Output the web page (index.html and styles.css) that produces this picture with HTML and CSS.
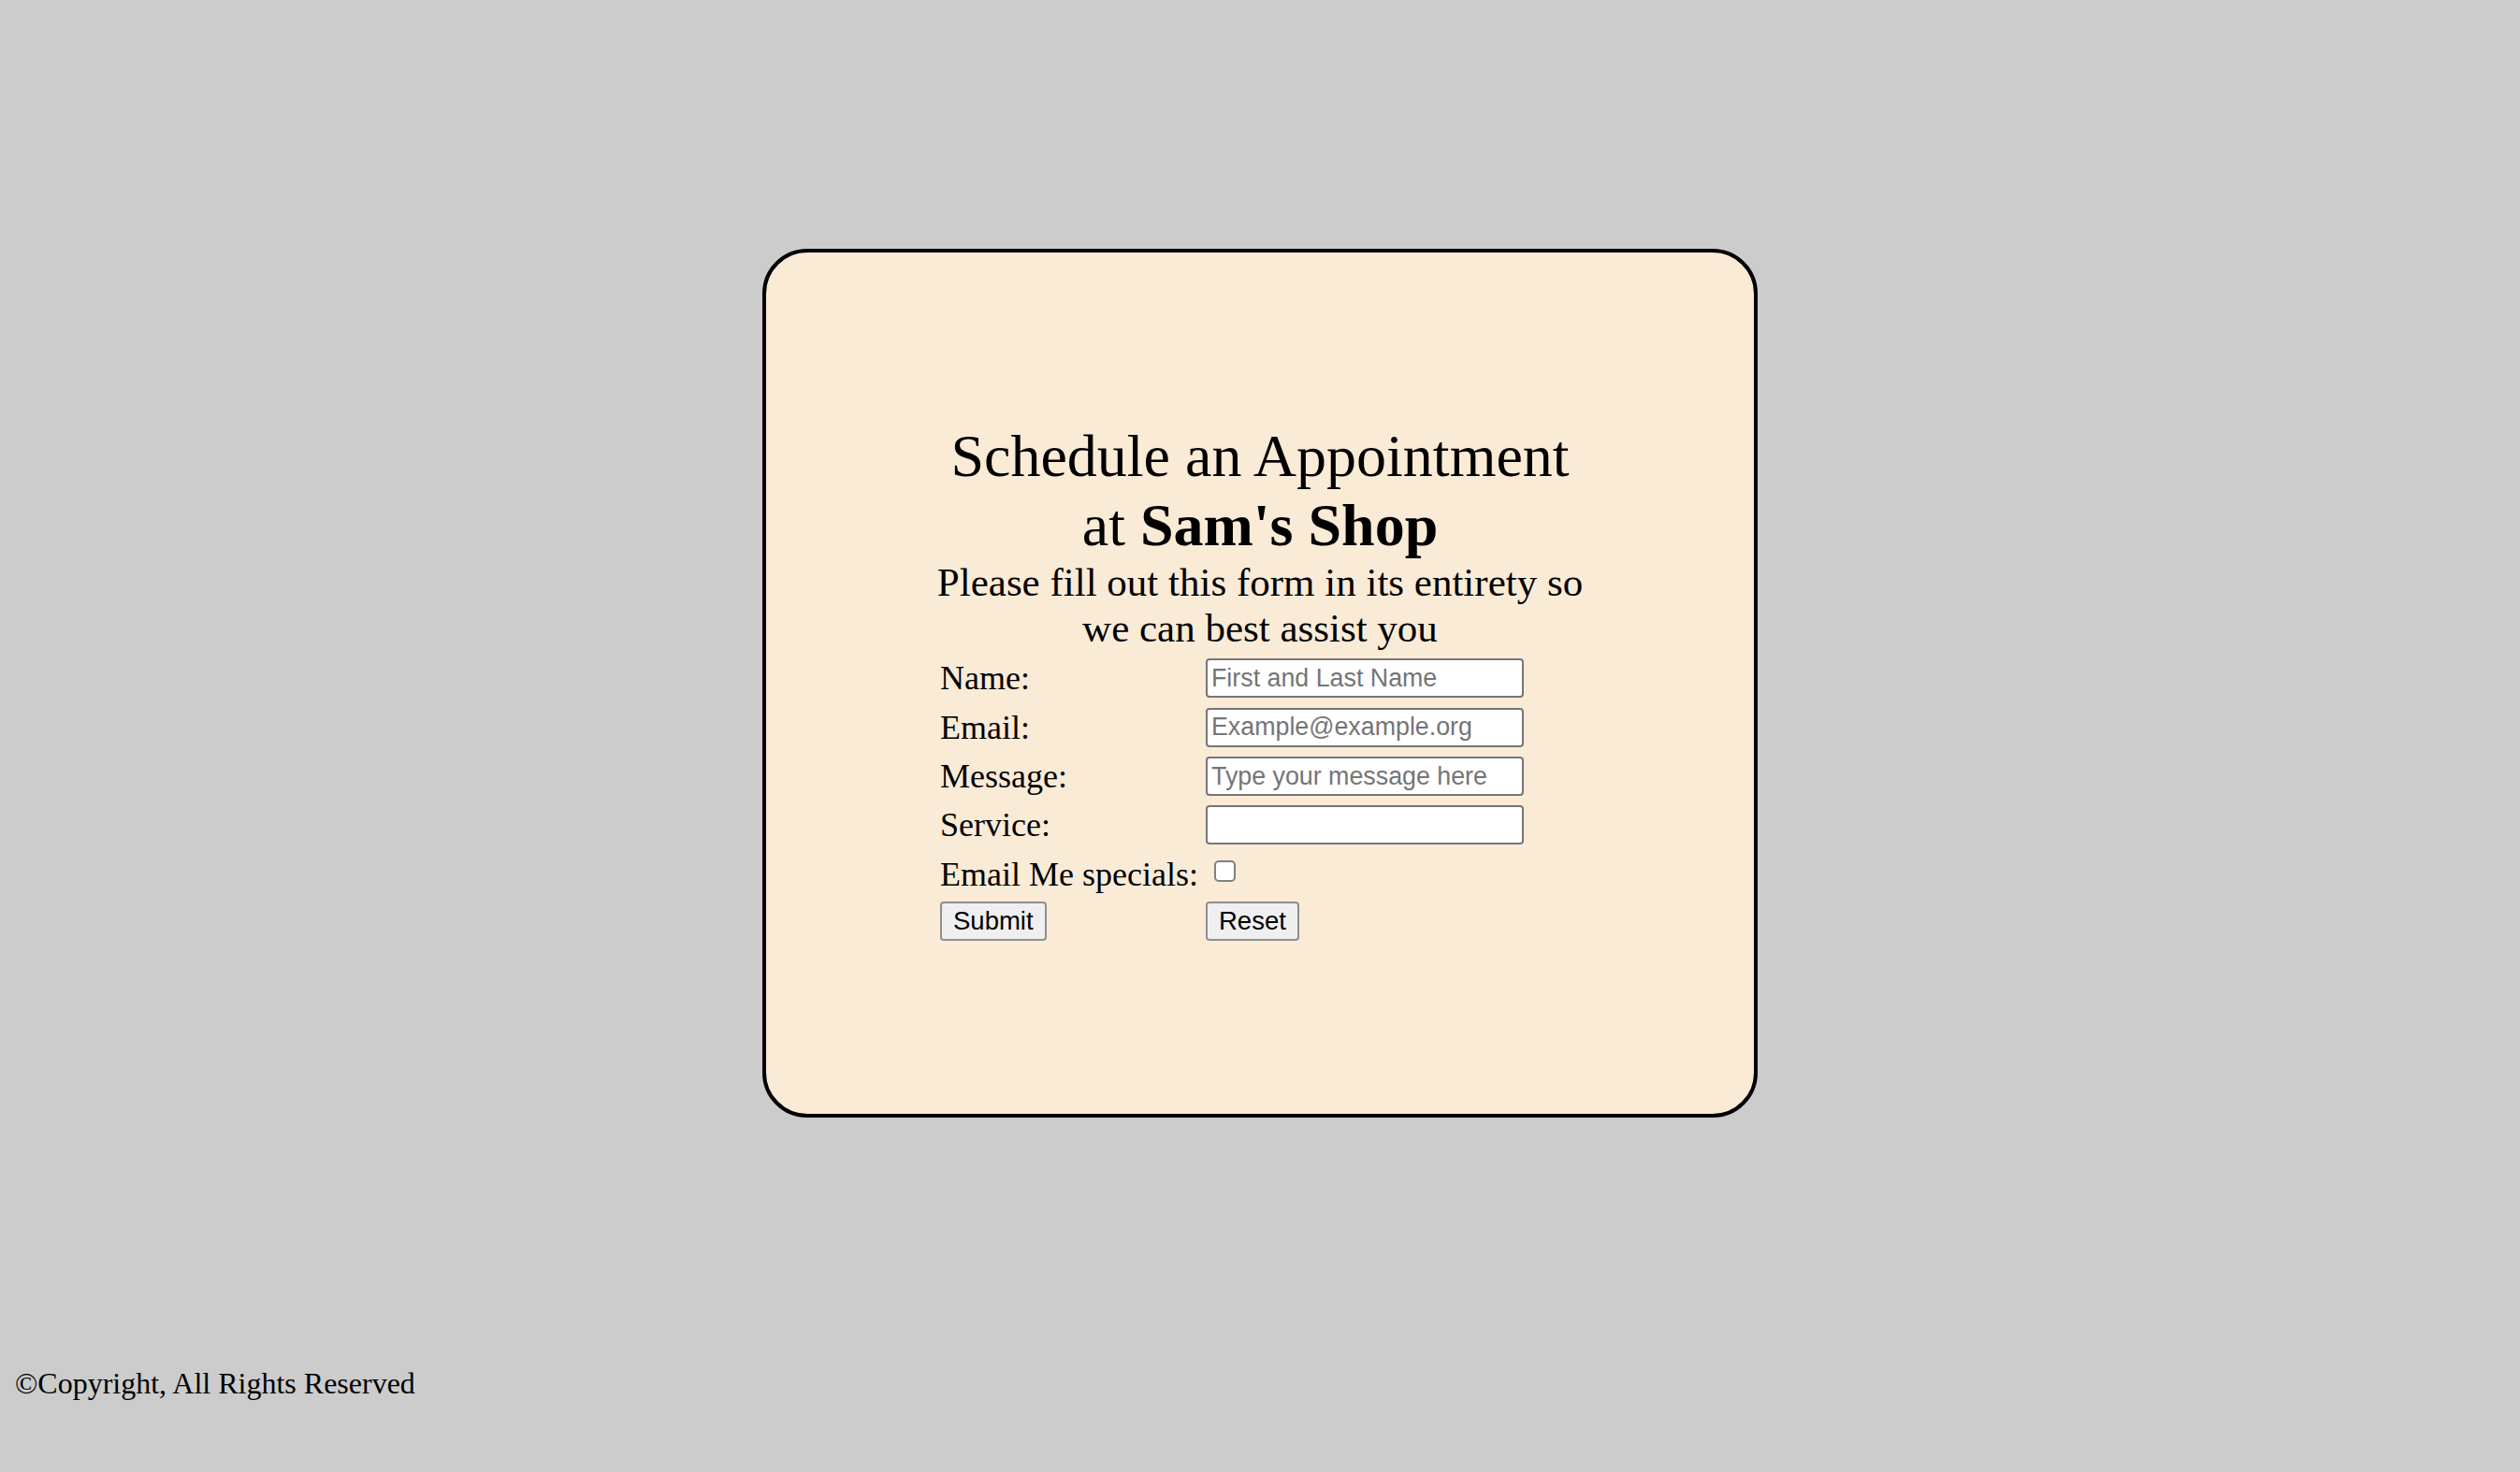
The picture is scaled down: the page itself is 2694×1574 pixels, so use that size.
FILE: index.html
```html
<!DOCTYPE html>
<html lang="en">
<head>
<meta charset="utf-8">
<title>Schedule an Appointment at Sam's Shop</title>
<link rel="stylesheet" href="styles.css">
</head>
<body>
  <div class="card">
    <div class="inner">
      <h1 class="title">Schedule an Appointment at <strong>Sam's Shop</strong></h1>
      <p class="subtitle">Please fill out this form in its entirety so we can best assist you</p>
      <form class="form">
        <label class="label" for="name">Name:</label>
        <input class="field" id="name" type="text" placeholder="First and Last Name">
        <label class="label" for="email">Email:</label>
        <input class="field" id="email" type="email" placeholder="Example@example.org">
        <label class="label" for="message">Message:</label>
        <input class="field" id="message" type="text" placeholder="Type your message here">
        <label class="label" for="service">Service:</label>
        <input class="field" id="service" type="text">
        <label class="label" for="specials">Email Me specials:</label>
        <div class="check-cell"><input class="check" id="specials" type="checkbox"></div>
        <div class="action"><button class="btn" type="submit">Submit</button></div>
        <div class="action"><button class="btn" type="reset">Reset</button></div>
      </form>
    </div>
  </div>
  <p class="footer">©Copyright, All Rights Reserved</p>
</body>
</html>
```

FILE: styles.css
```css
html, body {
  background: #cccccc;
}

body {
  margin: 16px;
  font-family: "Liberation Serif", "Times New Roman", serif;
  color: #000;
}

.card {
  box-sizing: border-box;
  width: 1064px;
  margin: 250px auto 0;
  padding: 181px 0 176px;
  background: #faebd7;
  border: 4px solid #000;
  border-radius: 48px;
}

.inner {
  width: 700px;
  margin: 0 auto;
}

.title {
  margin: 0;
  font-size: 64px;
  font-weight: normal;
  line-height: 73.6px;
  text-align: center;
}

.title strong {
  font-weight: bold;
}

.subtitle {
  margin: 0;
  font-size: 43px;
  line-height: 49px;
  text-align: center;
}

.form {
  display: grid;
  grid-template-columns: 284px 1fr;
  grid-auto-rows: 48.33px;
  row-gap: 4px;
  align-items: center;
  padding: 5px 0 4px 8px;
}

.label {
  font-size: 36px;
  line-height: 44px;
  white-space: nowrap;
}

.field {
  box-sizing: border-box;
  width: 340px;
  height: 42px;
  margin: 0;
  padding: 2px 4px;
  font-family: "Liberation Sans", Arial, sans-serif;
  font-size: 26.8px;
  color: #000;
  background: #fff;
  border: 2px solid #767676;
  border-radius: 4px;
  outline: none;
}

.field::placeholder {
  color: #757575;
}

.check-cell {
  align-self: start;
  padding: 9px 0 0 9px;
}

.check {
  appearance: none;
  -webkit-appearance: none;
  display: block;
  box-sizing: border-box;
  width: 23px;
  height: 23px;
  margin: 0;
  background: #fff;
  border: 2px solid #808080;
  border-radius: 5px;
}

.action {
  align-self: start;
  padding-top: 1px;
}

.btn {
  box-sizing: border-box;
  height: 42px;
  margin: 0;
  padding: 0 12px;
  font-family: "Liberation Sans", Arial, sans-serif;
  font-size: 27.5px;
  color: #000;
  background: #efefef;
  border: 2px solid #8f8f8f;
  border-radius: 4px;
}

.footer {
  margin: 266px 0 0;
  font-size: 32px;
  line-height: 36.8px;
}
```
